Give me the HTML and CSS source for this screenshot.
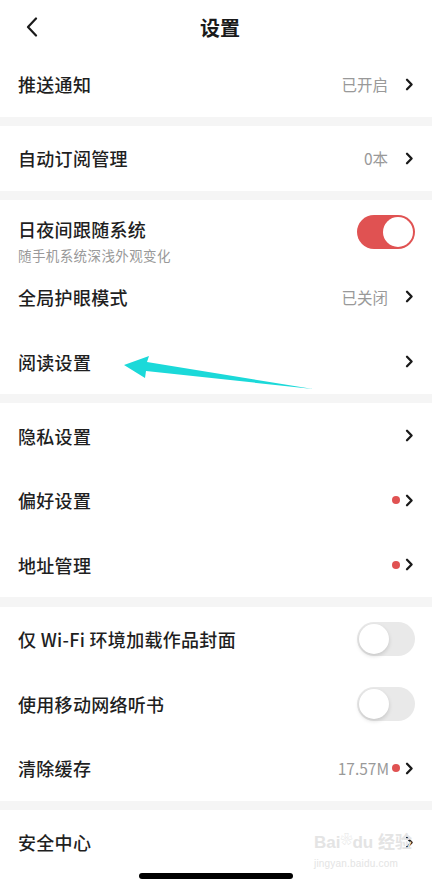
FILE: index.html
```html
<!DOCTYPE html>
<html lang="zh-CN">
<head>
  <meta charset="UTF-8">
  <title>设置</title>
  <link rel="stylesheet" href="styles.css">
</head>
<body>
  <div class="page">
    <!-- Header -->
    <div class="header">
      <svg class="back" width="14" height="20" viewBox="0 0 14 20"><path d="M11 1.5 L3 10 L11 18.5" fill="none" stroke="#1a1a1a" stroke-width="2.2" stroke-linecap="round" stroke-linejoin="round"/></svg>
      <div class="title">设置</div>
    </div>

    <div class="group">
      <div class="row">
        <span class="label">推送通知</span>
        <span class="right"><span class="value">已开启</span><svg class="chev" width="9" height="13" viewBox="0 0 9 13"><path d="M2 1.8 L6.6 6.5 L2 11.2" fill="none" stroke="#1a1a1a" stroke-width="2.3" stroke-linecap="round" stroke-linejoin="round"/></svg></span>
      </div>
    </div>

    <div class="group">
      <div class="row">
        <span class="label">自动订阅管理</span>
        <span class="right"><span class="value">0本</span><svg class="chev" width="9" height="13" viewBox="0 0 9 13"><path d="M2 1.8 L6.6 6.5 L2 11.2" fill="none" stroke="#1a1a1a" stroke-width="2.3" stroke-linecap="round" stroke-linejoin="round"/></svg></span>
      </div>
    </div>

    <div class="group">
      <div class="row row-sub">
        <div class="label-box">
          <span class="label">日夜间跟随系统</span>
          <span class="sub">随手机系统深浅外观变化</span>
        </div>
        <span class="toggle on"><span class="knob"></span></span>
      </div>
      <div class="row">
        <span class="label">全局护眼模式</span>
        <span class="right"><span class="value">已关闭</span><svg class="chev" width="9" height="13" viewBox="0 0 9 13"><path d="M2 1.8 L6.6 6.5 L2 11.2" fill="none" stroke="#1a1a1a" stroke-width="2.3" stroke-linecap="round" stroke-linejoin="round"/></svg></span>
      </div>
      <div class="row">
        <span class="label">阅读设置</span>
        <span class="right"><svg class="chev" width="9" height="13" viewBox="0 0 9 13"><path d="M2 1.8 L6.6 6.5 L2 11.2" fill="none" stroke="#1a1a1a" stroke-width="2.3" stroke-linecap="round" stroke-linejoin="round"/></svg></span>
      </div>
    </div>

    <div class="group">
      <div class="row">
        <span class="label">隐私设置</span>
        <span class="right"><svg class="chev" width="9" height="13" viewBox="0 0 9 13"><path d="M2 1.8 L6.6 6.5 L2 11.2" fill="none" stroke="#1a1a1a" stroke-width="2.3" stroke-linecap="round" stroke-linejoin="round"/></svg></span>
      </div>
      <div class="row">
        <span class="label">偏好设置</span>
        <span class="right"><span class="dot"></span><svg class="chev near" width="9" height="13" viewBox="0 0 9 13"><path d="M2 1.8 L6.6 6.5 L2 11.2" fill="none" stroke="#1a1a1a" stroke-width="2.3" stroke-linecap="round" stroke-linejoin="round"/></svg></span>
      </div>
      <div class="row">
        <span class="label">地址管理</span>
        <span class="right"><span class="dot"></span><svg class="chev near" width="9" height="13" viewBox="0 0 9 13"><path d="M2 1.8 L6.6 6.5 L2 11.2" fill="none" stroke="#1a1a1a" stroke-width="2.3" stroke-linecap="round" stroke-linejoin="round"/></svg></span>
      </div>
    </div>

    <div class="group">
      <div class="row">
        <span class="label">仅 Wi-Fi 环境加载作品封面</span>
        <span class="toggle"><span class="knob"></span></span>
      </div>
      <div class="row">
        <span class="label">使用移动网络听书</span>
        <span class="toggle"><span class="knob"></span></span>
      </div>
      <div class="row">
        <span class="label">清除缓存</span>
        <span class="right"><span class="value tight">17.57M</span><span class="dot"></span><svg class="chev near" width="9" height="13" viewBox="0 0 9 13"><path d="M2 1.8 L6.6 6.5 L2 11.2" fill="none" stroke="#1a1a1a" stroke-width="2.3" stroke-linecap="round" stroke-linejoin="round"/></svg></span>
      </div>
    </div>

    <div class="group last">
      <div class="row">
        <span class="label">安全中心</span>
        <span class="right"><svg class="chev" width="9" height="13" viewBox="0 0 9 13"><path d="M2 1.8 L6.6 6.5 L2 11.2" fill="none" stroke="#1a1a1a" stroke-width="2.3" stroke-linecap="round" stroke-linejoin="round"/></svg></span>
      </div>
    </div>

    <!-- annotation arrow -->
    <svg class="arrow" width="432" height="886" viewBox="0 0 432 886">
      <polygon points="124,365 149,356 147,362 313,389 146,371 145,378" fill="#1bd9d9"/>
    </svg>

    <!-- watermark -->
    <div class="watermark">
      <div class="wm-top">Bai<span class="paw">❀</span>du 经验</div>
      <div class="wm-url">jingyan.baidu.com</div>
    </div>

    <div class="home-bar"></div>
  </div>
</body>
</html>
```

FILE: styles.css
```css
body {
  margin: 0;
  background: #f5f5f5;
  font-family: "Noto Sans CJK SC", "Noto Sans", sans-serif;
  color: #1f1f1f;
}

.page {
  position: relative;
  width: 432px;
  height: 886px;
  overflow: hidden;
  background: #f5f5f5;
}

.header {
  height: 52px;
  background: #fff;
  display: flex;
  align-items: center;
  justify-content: center;
  position: relative;
  padding-left: 8px;
}

.back {
  position: absolute;
  left: 25px;
  top: 17px;
}

.title {
  font-size: 20px;
  font-weight: bold;
  color: #1a1a1a;
  margin-top: 2px;
}

.group {
  background: #fff;
  margin-bottom: 9.33px;
}

.group.last {
  margin-bottom: 0;
  height: 80px;
}

.row {
  height: 64.67px;
  display: flex;
  align-items: center;
  justify-content: space-between;
  padding: 0 18px 0 18px;
  box-sizing: border-box;
}

.label {
  font-size: 18px;
  font-weight: 500;
  color: #1f1f1f;
  letter-spacing: 0.3px;
}

.label-box {
  display: flex;
  flex-direction: column;
  margin-top: 16px;
}

.sub {
  font-size: 13.5px;
  color: #999;
  margin-top: 3px;
  letter-spacing: 0.4px;
}

.right {
  display: flex;
  align-items: center;
}

.value {
  font-size: 15.5px;
  color: #999;
  margin-right: 17px;
}

.value.tight {
  margin-right: 3px;
}

.chev {
  display: block;
}

.dot {
  width: 8px;
  height: 8px;
  border-radius: 50%;
  background: #e05252;
  margin-right: 5px;
}

.toggle {
  width: 58px;
  height: 34px;
  border-radius: 17px;
  background: #e9e9e9;
  position: relative;
  margin-right: -1px;
}

.toggle .knob {
  position: absolute;
  top: 2px;
  left: 2px;
  width: 30px;
  height: 30px;
  border-radius: 50%;
  background: #fff;
  box-shadow: 0 2px 4px rgba(0, 0, 0, 0.15);
}

.toggle.on {
  background: #e05252;
}

.toggle.on .knob {
  left: auto;
  right: 2px;
  box-shadow: none;
}

.arrow {
  position: absolute;
  left: 0;
  top: 0;
  pointer-events: none;
}

.watermark {
  position: absolute;
  left: 314px;
  top: 834px;
  color: #e4e4e4;
  font-family: "Liberation Sans", "Noto Sans CJK SC", sans-serif;
  white-space: nowrap;
  line-height: 1;
}

.wm-top {
  font-size: 17px;
  font-weight: bold;
}

.paw {
  font-size: 12px;
  vertical-align: top;
}

.wm-url {
  font-size: 10px;
  margin-top: 8px;
  letter-spacing: 0.2px;
}

.home-bar {
  position: absolute;
  left: 139px;
  top: 873px;
  width: 154px;
  height: 6px;
  border-radius: 3px;
  background: #000;
}
```
